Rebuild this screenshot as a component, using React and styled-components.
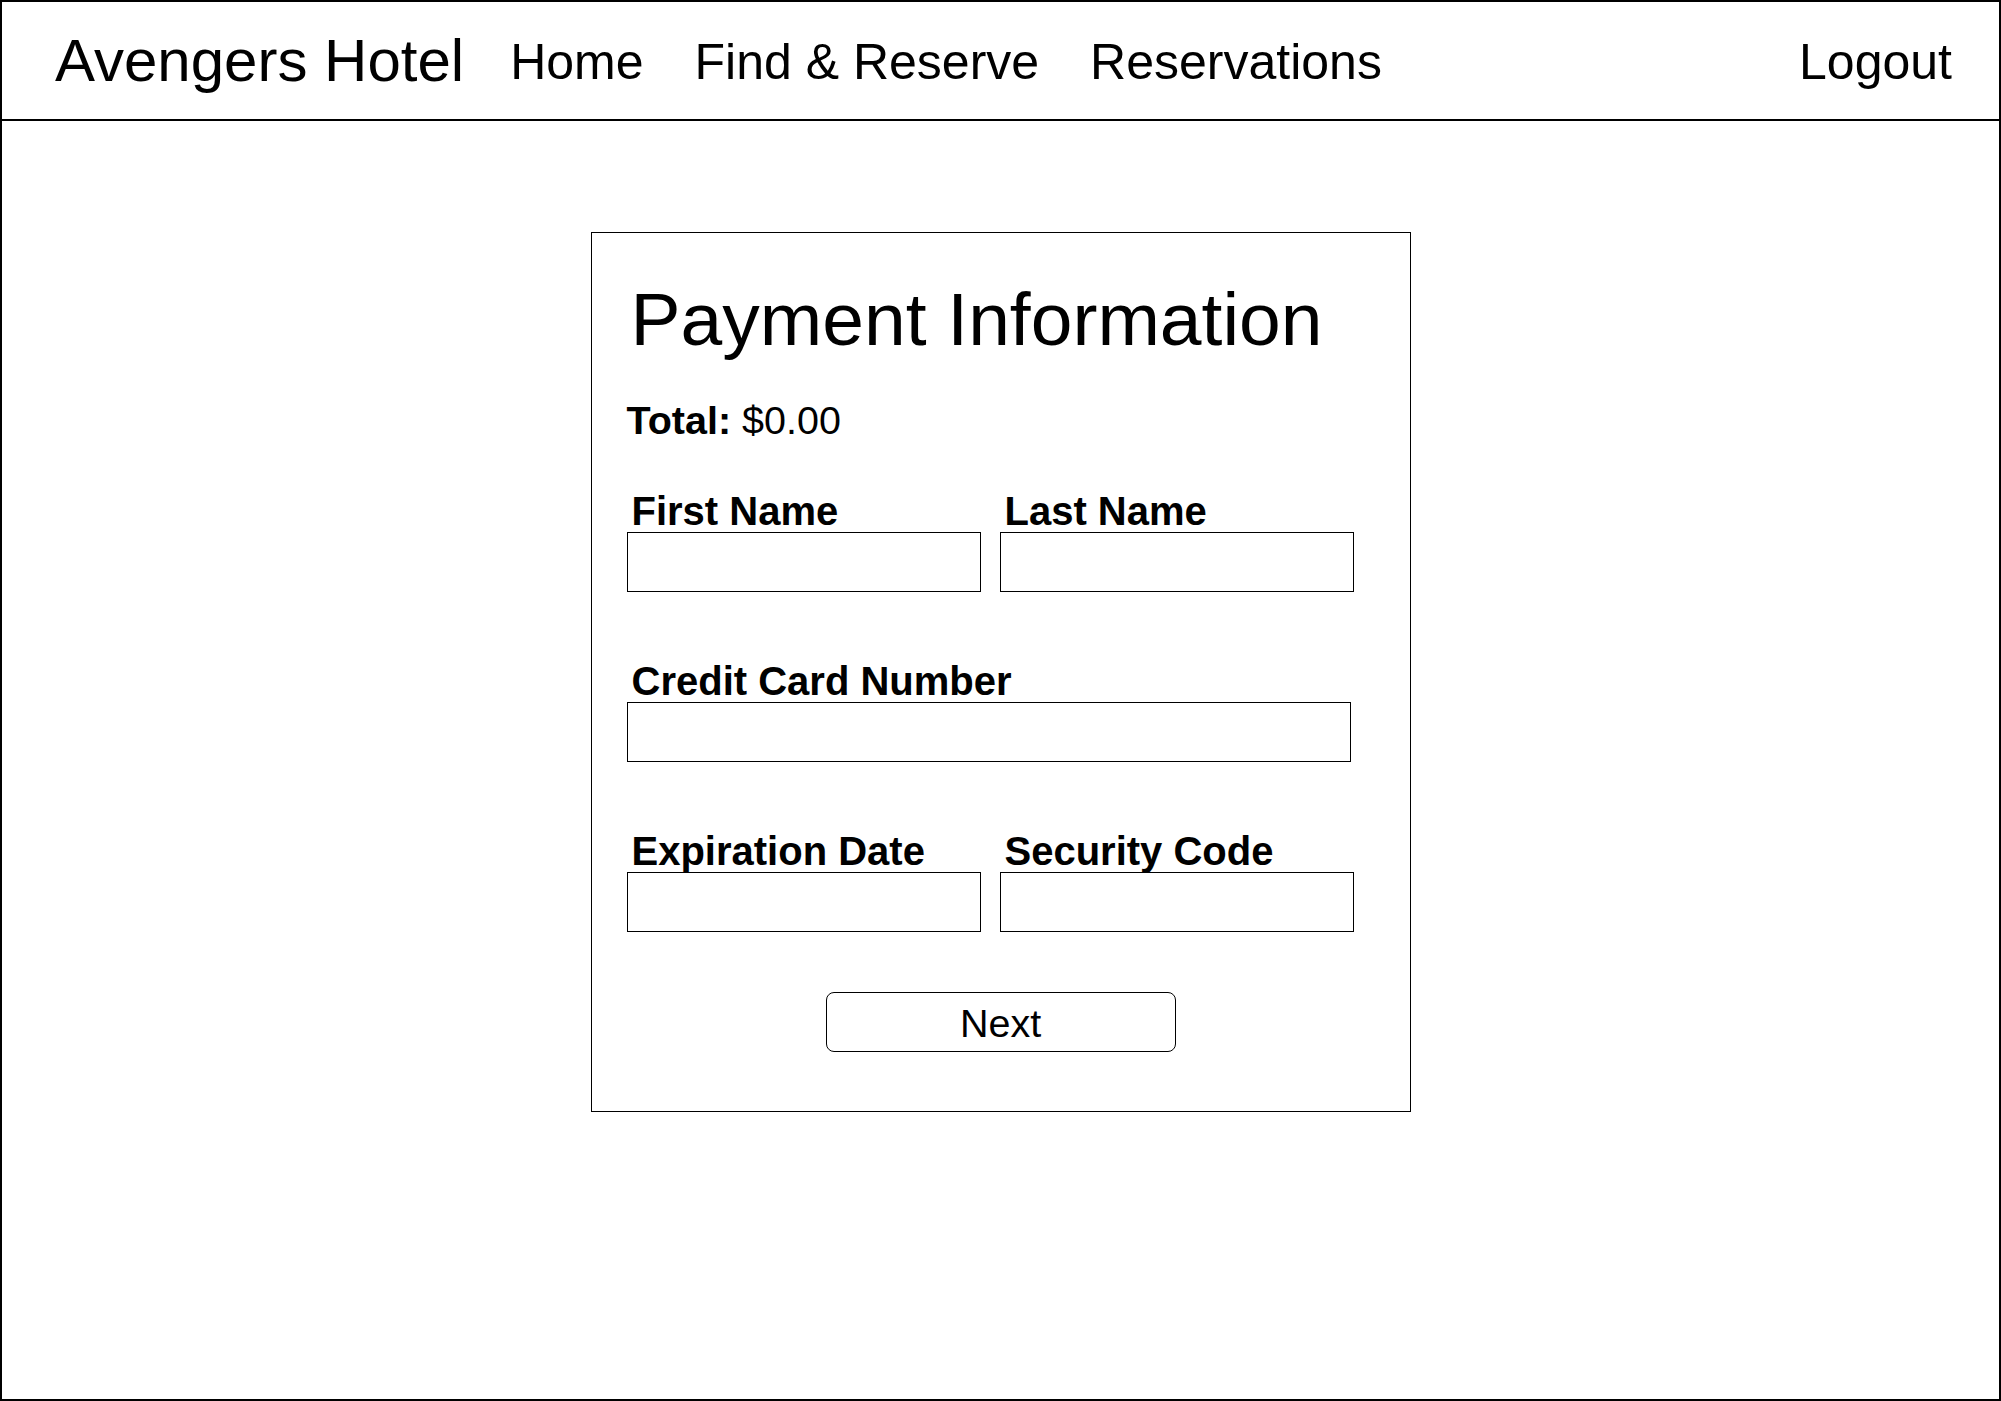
import React from "react";
import styled, { createGlobalStyle } from "styled-components";

const GlobalStyle = createGlobalStyle`
  * { box-sizing: border-box; }
  html, body { margin: 0; padding: 0; background: #fff; }
  body {
    font-family: "Liberation Sans", Arial, sans-serif;
    color: #000;
  }
`;

const Frame = styled.div`
  width: 100%;
  height: 100vh;
  border: 2px solid #000;
  display: flex;
  flex-direction: column;
`;

const Header = styled.header`
  height: 119px;
  flex-shrink: 0;
  display: flex;
  align-items: center;
  padding: 0 47px 0 53px;
  border-bottom: 2px solid #000;
`;

const Brand = styled.div`
  font-size: 60px;
  line-height: 1;
  margin-right: 46px;
  white-space: nowrap;
`;

const Nav = styled.nav`
  display: flex;
  align-items: center;
  gap: 51px;
  flex: 1;
`;

const NavLink = styled.a`
  font-size: 50px;
  line-height: 1;
  margin-top: 2px;
  white-space: nowrap;
  cursor: pointer;
  margin-left: ${({ $push }) => ($push ? "auto" : "0")};
`;

const Main = styled.main`
  flex: 1;
  display: flex;
  justify-content: center;
  align-items: flex-start;
`;

const Card = styled.section`
  width: 820px;
  margin-top: 111px;
  border: 1px solid #000;
  padding: 49px 35px 59px;
  display: flex;
  flex-direction: column;
`;

const Title = styled.h1`
  margin: 0 0 0 4px;
  font-size: 75px;
  font-weight: normal;
  line-height: 1;
`;

const Total = styled.p`
  margin: 44px 0 0;
  font-size: 39.5px;
  line-height: 1;
  b { font-weight: bold; }
`;

const Row = styled.div`
  display: flex;
  gap: 19px;
  margin-top: ${({ $top }) => $top}px;
`;

const Field = styled.div`
  display: flex;
  flex-direction: column;
  width: ${({ $w }) => $w}px;
`;

const Label = styled.label`
  font-size: 40px;
  font-weight: bold;
  line-height: 1;
  padding-left: 5px;
  margin-bottom: 1px;
  white-space: nowrap;
`;

const Input = styled.input`
  height: 60px;
  width: 100%;
  border: 1px solid #000;
  border-radius: 0;
  background: #fff;
  font-family: inherit;
  font-size: 30px;
  padding: 0 10px;
  outline: none;
`;

const Actions = styled.div`
  display: flex;
  justify-content: center;
  margin-top: 60px;
`;

const Button = styled.button`
  width: 350px;
  height: 60px;
  border: 1px solid #000;
  border-radius: 8px;
  background: #fff;
  color: #000;
  font-family: inherit;
  font-size: 39.5px;
  line-height: 1;
  padding: 4px 0 0;
  cursor: pointer;
`;

export default function App() {
  return (
    <>
      <GlobalStyle />
      <Frame>
        <Header>
          <Brand>Avengers Hotel</Brand>
          <Nav>
            <NavLink>Home</NavLink>
            <NavLink>Find &amp; Reserve</NavLink>
            <NavLink>Reservations</NavLink>
            <NavLink $push>Logout</NavLink>
          </Nav>
        </Header>
        <Main>
          <Card>
            <Title>Payment Information</Title>
            <Total>
              <b>Total:</b> $0.00
            </Total>
            <Row $top={50}>
              <Field $w={354}>
                <Label>First Name</Label>
                <Input type="text" />
              </Field>
              <Field $w={354}>
                <Label>Last Name</Label>
                <Input type="text" />
              </Field>
            </Row>
            <Row $top={69}>
              <Field $w={724}>
                <Label>Credit Card Number</Label>
                <Input type="text" />
              </Field>
            </Row>
            <Row $top={69}>
              <Field $w={354}>
                <Label>Expiration Date</Label>
                <Input type="text" />
              </Field>
              <Field $w={354}>
                <Label>Security Code</Label>
                <Input type="text" />
              </Field>
            </Row>
            <Actions>
              <Button>Next</Button>
            </Actions>
          </Card>
        </Main>
      </Frame>
    </>
  );
}
